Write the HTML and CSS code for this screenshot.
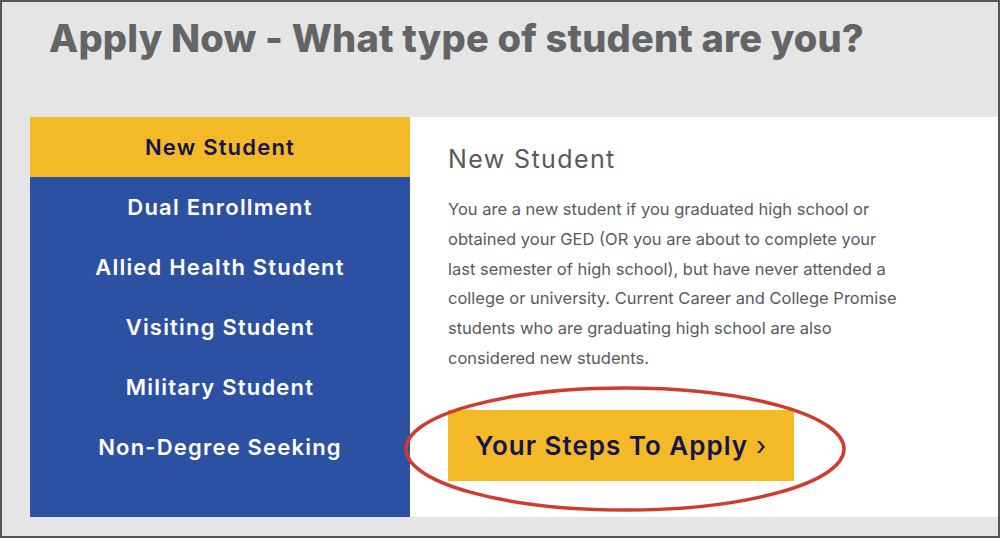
FILE: index.html
```html
<!DOCTYPE html>
<html lang="en">
<head>
<meta charset="utf-8">
<title>Apply Now</title>
<link rel="stylesheet" href="styles.css">
</head>
<body>

<div class="frame">
  <h1 class="title">Apply Now - What type of student are you?</h1>

  <div class="panel">
    <ul class="types">
      <li class="type active">New Student</li>
      <li class="type">Dual Enrollment</li>
      <li class="type">Allied Health Student</li>
      <li class="type">Visiting Student</li>
      <li class="type">Military Student</li>
      <li class="type">Non-Degree Seeking</li>
    </ul>

    <div class="detail">
      <h2 class="detail-title">New Student</h2>
      <p class="detail-text">
        You are a new student if you graduated high school or<br>
        obtained your GED (OR you are about to complete your<br>
        last semester of high school), but have never attended a<br>
        college or university. Current Career and College Promise<br>
        students who are graduating high school are also<br>
        considered new students.
      </p>
      <div class="cta-wrap">
        <a class="cta" href="#">Your Steps To Apply <span class="chev">&rsaquo;</span></a>
        <!-- red annotation circle -->
        <svg class="ring" width="446" height="130" viewBox="0 0 446 130">
          <ellipse cx="223" cy="65" rx="219" ry="61" fill="none" stroke="#d03b2b" stroke-width="3.5"/>
        </svg>
      </div>
    </div>
  </div>
</div>

</body>
</html>
```

FILE: styles.css
```css
body {
  margin: 0;
  background-color: #555555;
}
.frame {
  box-sizing: border-box;
  width: 1000px;
  height: 538px;
  border: 2px solid #555555;
  background-color: #e5e5e5;
  overflow: hidden;
  font-family: Inter, "Liberation Sans", sans-serif;
}
.title {
  margin: 13px 0 0 47px;
  font-size: 38px;
  font-weight: 800;
  letter-spacing: 0.2px;
  color: #636466;
  line-height: 46px;
}
.panel {
  display: flex;
  margin: 56px 0 0 28px;
  height: 400px;
}
.types {
  list-style: none;
  margin: 0;
  padding: 0;
  width: 380px;
  background-color: #2c51a2;
}
.type {
  height: 60px;
  display: flex;
  align-items: center;
  justify-content: center;
  font-size: 22px;
  font-weight: 600;
  letter-spacing: 1.2px;
  color: #ffffff;
}
.type.active {
  background-color: #f4b927;
  color: #14144e;
}
.detail {
  flex: 1;
  background-color: #ffffff;
  padding: 26px 0 0 38px;
}
.detail-title {
  margin: 0;
  font-size: 25px;
  font-weight: 400;
  letter-spacing: 1.4px;
  color: #58595b;
  line-height: 32px;
}
.detail-text {
  margin: 20px 0 0 0;
  white-space: nowrap;
  font-size: 16.5px;
  line-height: 29.8px;
  color: #5a5a5c;
}
.cta-wrap {
  position: relative;
  margin-top: 36px;
}
.cta {
  display: inline-flex;
  align-items: center;
  justify-content: center;
  width: 346px;
  height: 71px;
  background-color: #f4b927;
  color: #14144e;
  font-size: 26px;
  font-weight: 600;
  letter-spacing: 1px;
  text-decoration: none;
}
.chev {
  margin-left: 8px;
  font-weight: 400;
}
.ring {
  position: absolute;
  left: -46px;
  top: -26px;
}
```
